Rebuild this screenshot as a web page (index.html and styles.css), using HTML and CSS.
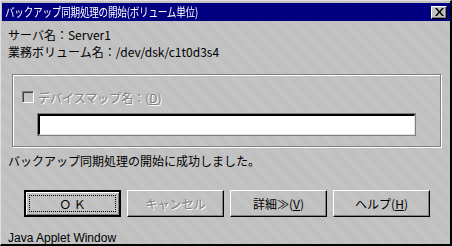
FILE: index.html
```html
<!DOCTYPE html>
<html lang="ja">
<head>
    <meta charset="UTF-8">
    <title>バックアップ同期処理の開始(ボリューム単位)</title>
    <link rel="stylesheet" href="styles.css">
</head>
<body>
    <div class="window">
        <div class="titlebar">
            <span class="title">バックアップ同期処理の開始(ボリューム単位)</span>
            <span class="close">
                <svg width="9" height="8" viewBox="0 0 9 8"><path d="M0 0h2l2.5 3 2.5-3h2l-3.5 4 3.5 4h-2l-2.5-3-2.5 3h-2l3.5-4z" fill="#000"/></svg>
            </span>
        </div>
        <div class="content">
            <div class="info">サーバ名：Server1</div>
            <div class="info">業務ボリューム名：/dev/dsk/c1t0d3s4</div>

            <div class="group">
                <label class="check disabled"><span class="box"></span>デバイスマップ名：(<u>D</u>)</label>
                <div class="field"><input type="text"></div>
            </div>

            <div class="message">バックアップ同期処理の開始に成功しました。</div>

            <div class="buttons">
                <button class="btn default"><span class="focus">Ｏ Ｋ</span></button>
                <button class="btn disabled">キャンセル</button>
                <button class="btn">詳細≫(<u>V</u>)</button>
                <button class="btn">ヘルプ(<u>H</u>)</button>
            </div>
            <div class="status">Java Applet Window</div>
        </div>
    </div>
</body>
</html>
```

FILE: styles.css
```css
html, body {
    margin: 0;
    padding: 0;
}
body {
    font-family: "Noto Sans CJK JP", "DejaVu Sans", sans-serif;
    font-size: 12px;
    color: #000;
    background: #c0c0c0;
}
.window {
    width: 452px;
    height: 246px;
    box-sizing: border-box;
    border-top: 1px solid #dfdfdf;
    border-left: 1px solid #dfdfdf;
    border-right: 2px solid #000;
    border-bottom: 2px solid #000;
    padding: 2px 0 1px 1px;
    background-color: #c2c2c2;
    background-image: repeating-linear-gradient(45deg, #c6c6c6 0 1px, #bdbdbd 1px 2px);
    display: flex;
    flex-direction: column;
}
.titlebar {
    height: 18px;
    background: #000080;
    color: #fff;
    display: flex;
    align-items: center;
    justify-content: space-between;
    padding: 0 3px 0 3px;
}
.title {
    font-size: 12px;
    letter-spacing: -0.3px;
    line-height: 18px;
    white-space: nowrap;
    transform: scaleX(0.8);
    transform-origin: left center;
}
.close {
    width: 16px;
    height: 13px;
    box-sizing: border-box;
    background: #c0c0c0;
    border-top: 1px solid #fff;
    border-left: 1px solid #fff;
    border-right: 1px solid #000;
    border-bottom: 1px solid #000;
    box-shadow: inset -1px -1px 0 #808080;
    display: flex;
    align-items: center;
    justify-content: center;
}
.content {
    flex: 1;
    padding: 5px 0 0 6px;
    display: flex;
    flex-direction: column;
}
.info {
    line-height: 17px;
    height: 17px;
}
.group {
    margin: 14px 9px 0 4px;
    height: 73px;
    box-sizing: border-box;
    border: 1px solid #808080;
    box-shadow: 1px 1px 0 #fff, inset 1px 1px 0 #fff;
    padding: 15px 0 0 9px;
}
.check {
    display: flex;
    align-items: center;
    height: 14px;
    color: #808080;
    text-shadow: 1px 1px 0 #fff;
}
.box {
    width: 12px;
    height: 12px;
    box-sizing: border-box;
    border-top: 1px solid #808080;
    border-left: 1px solid #808080;
    border-right: 1px solid #fff;
    border-bottom: 1px solid #fff;
    box-shadow: inset 1px 1px 0 #404040;
    margin-right: 4px;
}
.field {
    padding: 10px 0 0 16px;
}
.field input {
    display: block;
    width: 377px;
    height: 21px;
    box-sizing: border-box;
    border-top: 2px solid #000;
    border-left: 2px solid #000;
    border-right: 1px solid #dfdfdf;
    border-bottom: 1px solid #dfdfdf;
    outline: 1px solid #808080;
    background: #fff;
    padding: 0;
    margin: 0;
}
.message {
    margin-top: 6px;
    line-height: 16px;
}
.buttons {
    display: flex;
    gap: 6px;
    margin: 21px 0 0 16px;
}
.btn {
    width: 97px;
    height: 27px;
    box-sizing: border-box;
    font-family: inherit;
    font-size: 12px;
    color: #000;
    background: transparent;
    border-top: 1px solid #fff;
    border-left: 1px solid #fff;
    border-right: 1px solid #000;
    border-bottom: 1px solid #000;
    box-shadow: inset -1px -1px 0 #808080;
    padding: 0;
    margin: 0;
    cursor: pointer;
}
.btn.default {
    border: 2px solid #000;
    box-shadow: inset 1px 1px 0 #fff, inset -1px -1px 0 #808080;
    padding: 3px;
}
.btn .focus {
    display: flex;
    align-items: center;
    justify-content: center;
    height: 100%;
    border: 1px dotted #000;
    box-sizing: border-box;
}
.btn.disabled {
    color: #808080;
    text-shadow: 1px 1px 0 #fff;
}
.status {
    margin-top: 14px;
    font-family: "Liberation Sans", Arial, sans-serif;
    line-height: 14px;
}
```
